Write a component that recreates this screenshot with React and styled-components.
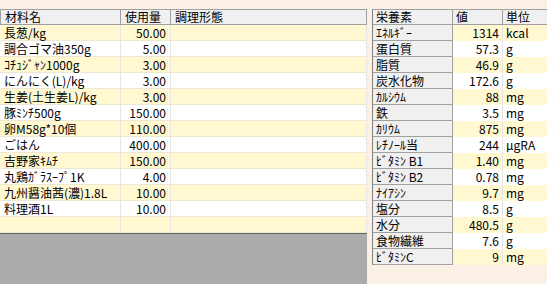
import styled, { createGlobalStyle } from 'styled-components'

const GlobalStyle = createGlobalStyle`
  html, body {
    margin: 0;
    padding: 0;
    background: #faf0e6;
    overflow: hidden;
  }
  body {
    font-family: "Noto Sans CJK JP", "Noto Sans", sans-serif;
    font-size: 12px;
    color: #000;
  }
`;

const Page = styled.div`
  width: 547px;
  height: 284px;
  padding-top: 9px;
  box-sizing: border-box;
  display: flex;
  gap: 5px;
  overflow: hidden;
`;

const LeftPane = styled.div`
  width: 367px;
  flex-shrink: 0;
  background: #ababab;
  display: flex;
  flex-direction: column;
`;

const RightPane = styled.div`
  flex-shrink: 0;
  width: 220px;
  align-self: flex-start;
  border-left: 1px solid #808080;
`;

const Row = styled.div`
  display: grid;
  grid-template-columns: ${p => p.$cols};
  height: 16px;
  box-sizing: border-box;
  background: ${p => (p.$odd ? '#fff8d0' : '#ffffff')};
  border-bottom: 1px solid #ede8d6;
`;

const HeadRow = styled.div`
  display: grid;
  grid-template-columns: ${p => p.$cols};
  height: 16px;
  box-sizing: border-box;
  background: #f0f0f0;
  border-top: 1px solid #a0a0a0;
  border-bottom: 1px solid #a0a0a0;
`;

const Rows = styled.div`
  border-bottom: 1px solid #696969;
`;

const HeadCell = styled.div`
  padding-left: ${p => (p.$pad ? p.$pad : 4)}px;
  height: 14px;
  line-height: 14px;
  border-right: 1px solid #a0a0a0;
  white-space: nowrap;
  &:first-child {
    border-left: ${p => (p.$edge ? '1px solid #a0a0a0' : 'none')};
  }
`;

const Cell = styled.div`
  padding: 0 4px;
  line-height: 15px;
  text-align: ${p => (p.$num ? 'right' : 'left')};
  border-right: 1px solid #e6e6e6;
  white-space: nowrap;
`;

const NameCell = styled.div`
  padding-left: 3px;
  line-height: 15px;
  background: #f0f0f0;
  border-right: 1px solid #a0a0a0;
  border-bottom: 1px solid #a0a0a0;
  white-space: nowrap;
`;

const NutRow = styled.div`
  display: grid;
  grid-template-columns: 80px 50px 90px;
  height: 16px;
  background: ${p => (p.$odd ? '#fff8d0' : '#ffffff')};
`;

const ValueCell = styled.div`
  padding-right: 3px;
  line-height: 16px;
  text-align: right;
  border-right: 1px solid #e6e6e6;
`;

const UnitCell = styled.div`
  padding-left: 3px;
  line-height: 16px;
`;

const ingredients = [
  ['長葱/kg', '50.00'],
  ['調合ゴマ油350g', '5.00'],
  ['ｺﾁｭｼﾞｬﾝ1000g', '3.00'],
  ['にんにく(L)/kg', '3.00'],
  ['生姜(土生姜L)/kg', '3.00'],
  ['豚ﾐﾝﾁ500g', '150.00'],
  ['卵M58g*10個', '110.00'],
  ['ごはん', '400.00'],
  ['吉野家ｷﾑﾁ', '150.00'],
  ['丸鶏ｶﾞﾗｽｰﾌﾟ1K', '4.00'],
  ['九州醤油茜(濃)1.8L', '10.00'],
  ['料理酒1L', '10.00'],
  ['', ''],
];

const nutrients = [
  ['ｴﾈﾙｷﾞｰ', '1314', 'kcal'],
  ['蛋白質', '57.3', 'g'],
  ['脂質', '46.9', 'g'],
  ['炭水化物', '172.6', 'g'],
  ['ｶﾙｼｳﾑ', '88', 'mg'],
  ['鉄', '3.5', 'mg'],
  ['ｶﾘｳﾑ', '875', 'mg'],
  ['ﾚﾁﾉｰﾙ当', '244', 'μgRA'],
  ['ﾋﾞﾀﾐﾝ B1', '1.40', 'mg'],
  ['ﾋﾞﾀﾐﾝ B2', '0.78', 'mg'],
  ['ﾅｲｱｼﾝ', '9.7', 'mg'],
  ['塩分', '8.5', 'g'],
  ['水分', '480.5', 'g'],
  ['食物繊維', '7.6', 'g'],
  ['ﾋﾞﾀﾐﾝC', '9', 'mg'],
];

const leftCols = '121px 50px 196px';

export default function App() {
  return (
    <>
      <GlobalStyle />
      <Page>
        <LeftPane>
          <HeadRow $cols={leftCols}>
            <HeadCell $edge>材料名</HeadCell>
            <HeadCell>使用量</HeadCell>
            <HeadCell>調理形態</HeadCell>
          </HeadRow>
          <Rows>
            {ingredients.map(([name, qty], i) => (
              <Row key={i} $cols={leftCols} $odd={i % 2 === 0}>
                <Cell>{name}</Cell>
                <Cell $num>{qty}</Cell>
                <Cell />
              </Row>
            ))}
          </Rows>
        </LeftPane>
        <RightPane>
          <HeadRow $cols="80px 50px 90px">
            <HeadCell $pad={3}>栄養素</HeadCell>
            <HeadCell $pad={3}>値</HeadCell>
            <HeadCell $pad={3}>単位</HeadCell>
          </HeadRow>
          {nutrients.map(([name, value, unit], i) => (
            <NutRow key={name} $odd={i % 2 === 0}>
              <NameCell>{name}</NameCell>
              <ValueCell>{value}</ValueCell>
              <UnitCell>{unit}</UnitCell>
            </NutRow>
          ))}
        </RightPane>
      </Page>
    </>
  )
}
